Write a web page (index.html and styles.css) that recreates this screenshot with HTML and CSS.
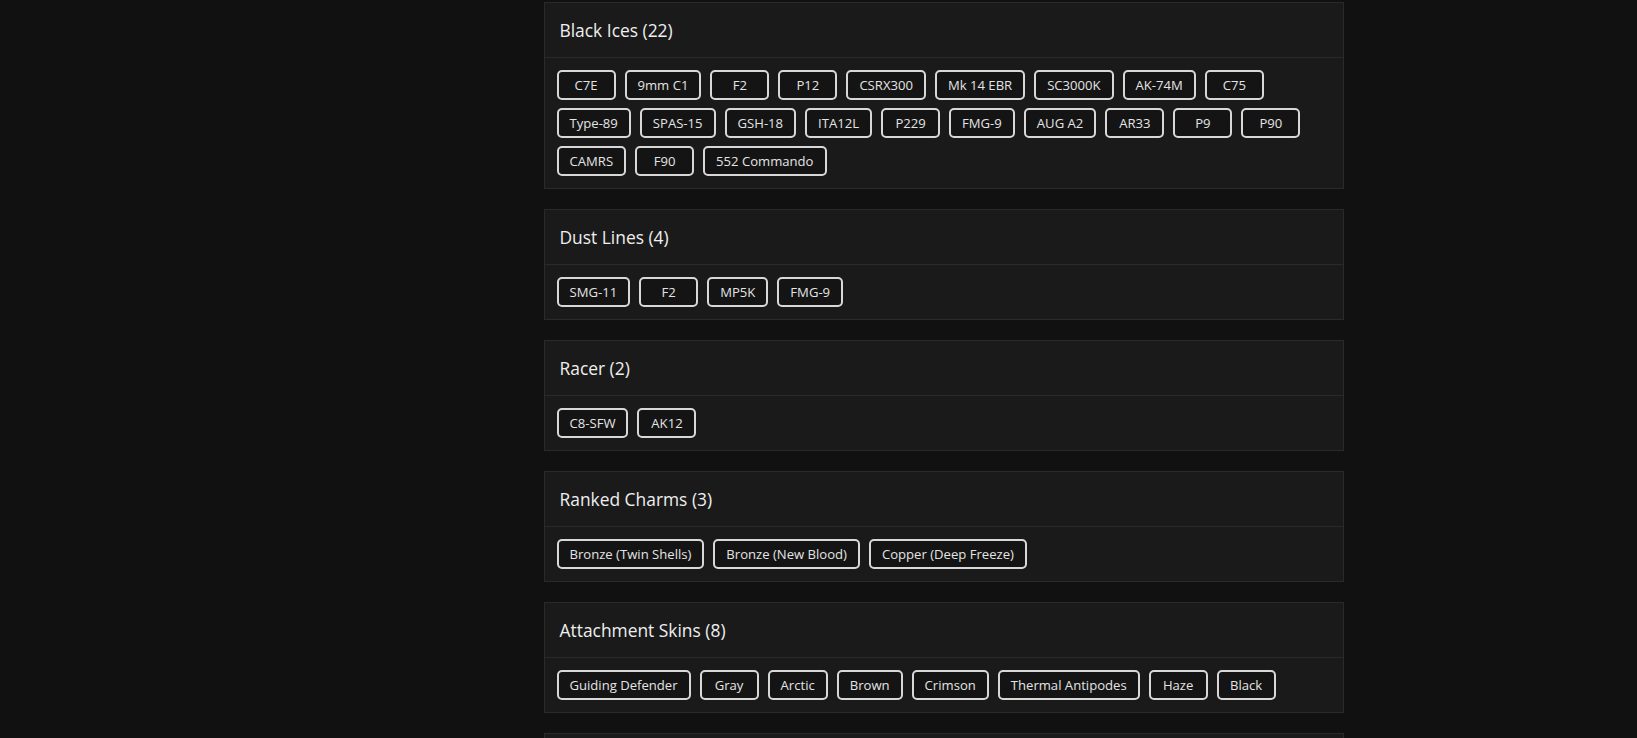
FILE: index.html
```html
<!DOCTYPE html>
<html lang="en">
<head>
<meta charset="utf-8">
<title>Collection</title>
<link rel="stylesheet" href="styles.css">
</head>
<body>
<div class="layout">
  <aside class="sidebar"></aside>
  <main class="main">
    <div class="column">
      <section class="card">
        <h2 class="card-title">Black Ices (22)</h2>
        <div class="tags">
          <span class="tag">C7E</span><span class="tag">9mm C1</span><span class="tag">F2</span><span class="tag">P12</span><span class="tag">CSRX300</span><span class="tag">Mk 14 EBR</span><span class="tag">SC3000K</span><span class="tag">AK-74M</span><span class="tag">C75</span>
          <span class="tag">Type-89</span><span class="tag">SPAS-15</span><span class="tag">GSH-18</span><span class="tag">ITA12L</span><span class="tag">P229</span><span class="tag">FMG-9</span><span class="tag">AUG A2</span><span class="tag">AR33</span><span class="tag">P9</span><span class="tag">P90</span>
          <span class="tag">CAMRS</span><span class="tag">F90</span><span class="tag">552 Commando</span>
        </div>
      </section>
      <section class="card">
        <h2 class="card-title">Dust Lines (4)</h2>
        <div class="tags">
          <span class="tag">SMG-11</span><span class="tag">F2</span><span class="tag">MP5K</span><span class="tag">FMG-9</span>
        </div>
      </section>
      <section class="card">
        <h2 class="card-title">Racer (2)</h2>
        <div class="tags">
          <span class="tag">C8-SFW</span><span class="tag">AK12</span>
        </div>
      </section>
      <section class="card">
        <h2 class="card-title">Ranked Charms (3)</h2>
        <div class="tags">
          <span class="tag">Bronze (Twin Shells)</span><span class="tag">Bronze (New Blood)</span><span class="tag">Copper (Deep Freeze)</span>
        </div>
      </section>
      <section class="card">
        <h2 class="card-title">Attachment Skins (8)</h2>
        <div class="tags">
          <span class="tag">Guiding Defender</span><span class="tag">Gray</span><span class="tag">Arctic</span><span class="tag">Brown</span><span class="tag">Crimson</span><span class="tag">Thermal Antipodes</span><span class="tag">Haze</span><span class="tag">Black</span>
        </div>
      </section>
      <section class="card">
        <h2 class="card-title">Headgear (1)</h2>
        <div class="tags">
          <span class="tag">Default</span>
        </div>
      </section>
    </div>
  </main>
</div>
</body>
</html>
```

FILE: styles.css
```css
* {
  box-sizing: border-box;
}

html, body {
  margin: 0;
  padding: 0;
  background: #111111;
  color: #e8e8e8;
  font-family: "Open Sans", "Liberation Sans", sans-serif;
}

body {
  height: 738px;
  overflow: hidden;
}

.layout {
  display: flex;
  min-height: 100vh;
}

.sidebar {
  width: 250px;
  flex: 0 0 250px;
  background: #111111;
}

.main {
  flex: 1;
  display: flex;
  justify-content: center;
  padding-top: 2px;
}

.column {
  width: 800px;
  display: flex;
  flex-direction: column;
  gap: 20px;
}

.card {
  background: #1a1a1a;
  border: 1px solid #2a2a2a;
}

.card-title {
  margin: 0;
  padding: 16px 15px;
  font-size: 17.4px;
  line-height: 22px;
  font-weight: 500;
  color: #efefef;
  border-bottom: 1px solid #2a2a2a;
}

.tags {
  display: flex;
  flex-wrap: wrap;
  gap: 8px 9px;
  padding: 12px;
}

.tag {
  display: inline-flex;
  align-items: center;
  justify-content: center;
  min-width: 59px;
  height: 30px;
  padding: 0 11px;
  border: 2px solid #d8d8d8;
  border-radius: 5px;
  background: #141414;
  color: #e4e4e4;
  font-size: 13.1px;
  line-height: 17px;
  white-space: nowrap;
}
```
